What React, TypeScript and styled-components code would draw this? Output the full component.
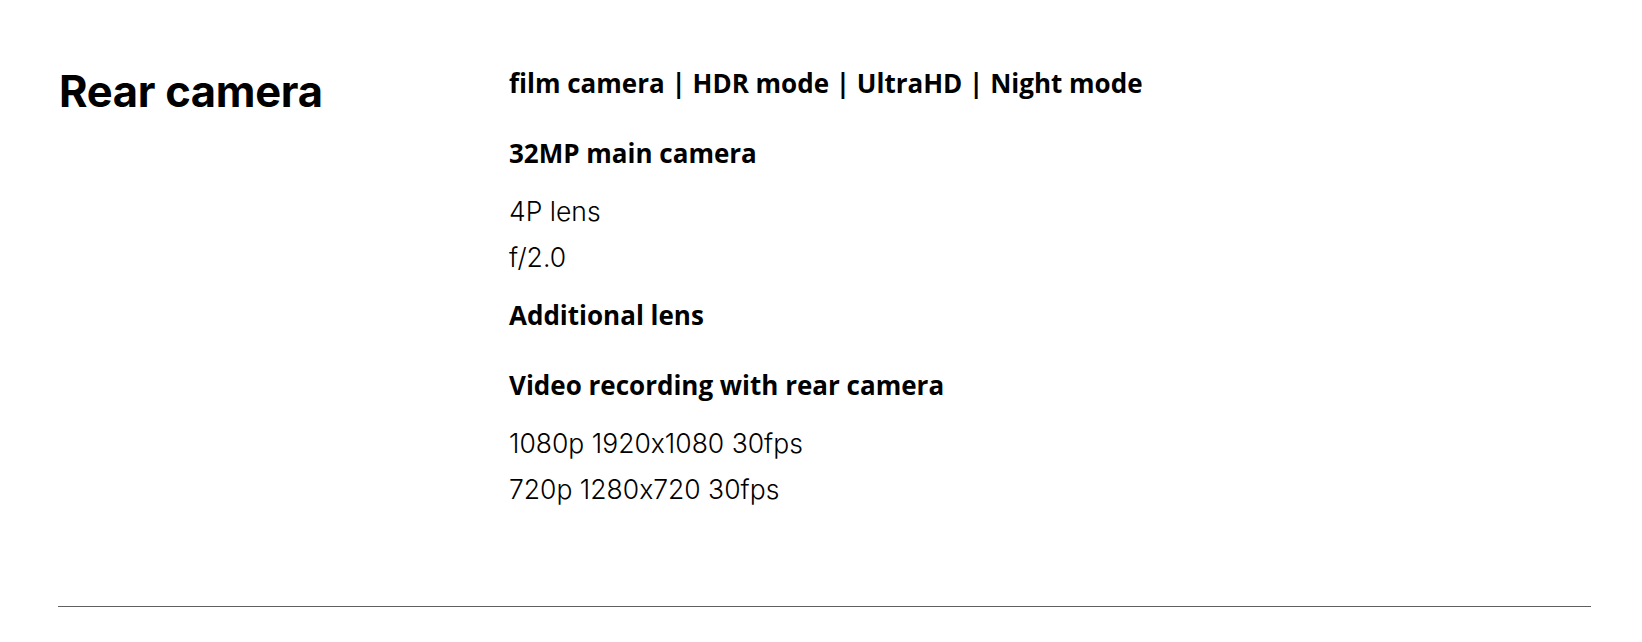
import React from "react";
import styled, { createGlobalStyle } from "styled-components";

const GlobalStyle = createGlobalStyle`
  html, body {
    margin: 0;
    padding: 0;
    background: #ffffff;
    color: #000000;
    font-family: Inter, "Noto Sans", "Liberation Sans", sans-serif;
    font-feature-settings: "calt" 0;
  }
`;

const Page = styled.div`
  padding: 67px 51px 0 58px;
`;

const Section = styled.section`
  display: grid;
  grid-template-columns: 451px 1fr;
  padding-bottom: 94px;
  border-bottom: 1px solid #5f5f5f;
`;

const Title = styled.h2`
  margin: 0 0 0 1px;
  font-size: 43.5px;
  line-height: 48px;
  font-weight: 700;
  letter-spacing: -0.3px;
`;

const SpecList = styled.div`
  display: flex;
  flex-direction: column;
`;

const Group = styled.div`
  display: flex;
  flex-direction: column;
  margin-bottom: 19px;
  &:last-child {
    margin-bottom: 0;
  }
`;

const Heading = styled.h3`
  margin: 0 0 19px;
  font-family: "Open Sans", "Noto Sans", sans-serif;
  font-size: 26px;
  line-height: 32px;
  font-weight: 700;
`;

const Value = styled.p`
  margin: 0;
  font-size: 26.5px;
  line-height: 46px;
  font-weight: 300;
`;

const groups: { heading: string; values: string[] }[] = [
  { heading: "film camera | HDR mode | UltraHD | Night mode", values: [] },
  { heading: "32MP main camera", values: ["4P lens", "f/2.0"] },
  { heading: "Additional lens", values: [] },
  {
    heading: "Video recording with rear camera",
    values: ["1080p 1920x1080 30fps", "720p 1280x720 30fps"],
  },
];

export default function App() {
  return (
    <>
      <GlobalStyle />
      <Page>
        <Section>
          <Title>Rear camera</Title>
          <SpecList>
            {groups.map((g) => (
              <Group key={g.heading}>
                <Heading>{g.heading}</Heading>
                {g.values.map((v) => (
                  <Value key={v}>{v}</Value>
                ))}
              </Group>
            ))}
          </SpecList>
        </Section>
      </Page>
    </>
  );
}
